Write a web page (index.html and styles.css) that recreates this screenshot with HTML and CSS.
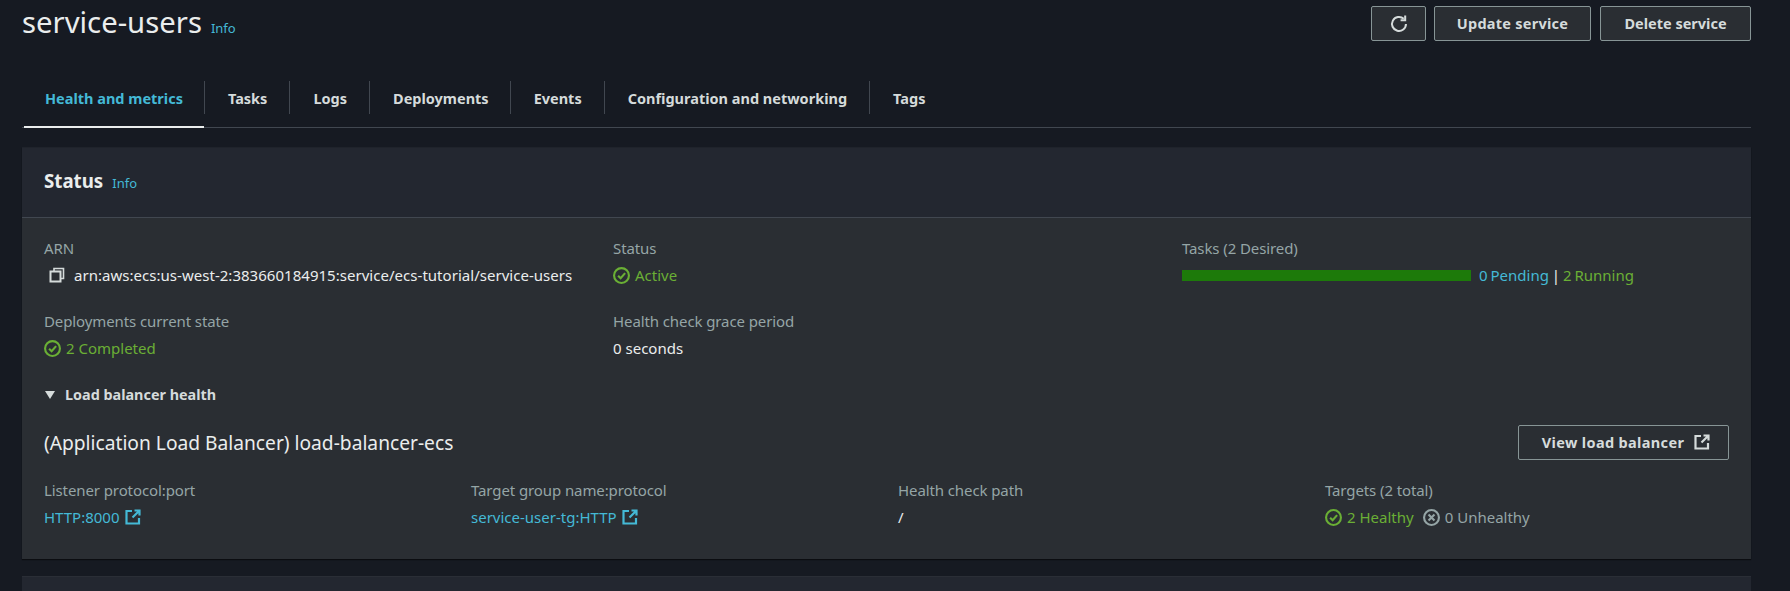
FILE: index.html
```html
<!DOCTYPE html>
<html lang="en">
<head>
<meta charset="utf-8">
<title>service-users</title>
<link rel="stylesheet" href="styles.css">
</head>
<body>
<svg class="defs" width="0" height="0" aria-hidden="true">
  <symbol id="ok" viewBox="0 0 16 16"><circle cx="8" cy="8" r="7" fill="none" stroke="currentColor" stroke-width="2"/><path d="M4.8 8.2 7.2 10.6 11.4 5.8" fill="none" stroke="currentColor" stroke-width="2"/></symbol>
  <symbol id="ext" viewBox="0 0 16 16"><path d="M7 2H1.5V14.5H14V9M9.5 1.5H14.5V6.5M14.5 1.5 7.5 8.5" fill="none" stroke="currentColor" stroke-width="2.2"/></symbol>
</svg>
<main class="page">
  <header class="head">
    <div class="title-wrap"><h1 class="title">service-users</h1><a class="info info-title">Info</a></div>
    <div class="actions">
      <button class="btn btn-icon" aria-label="Refresh"><svg width="18" height="18" viewBox="0 0 16 16"><path d="M14.2 8a6.2 6.2 0 1 1-2-4.6" fill="none" stroke="currentColor" stroke-width="1.8"/><path d="M13.5 0.5V4.6H9.4" fill="none" stroke="currentColor" stroke-width="1.8"/></svg></button>
      <button class="btn btn-update">Update service</button>
      <button class="btn btn-delete">Delete service</button>
    </div>
  </header>
  <nav class="tabs">
    <a class="tab tab-active">Health and metrics</a>
    <a class="tab">Tasks</a>
    <a class="tab">Logs</a>
    <a class="tab tab-tight">Deployments</a>
    <a class="tab">Events</a>
    <a class="tab">Configuration and networking</a>
    <a class="tab tab-last">Tags</a>
  </nav>
  <section class="card">
    <div class="card-head"><h2 class="card-title">Status</h2><a class="info">Info</a></div>
    <div class="card-body">
      <div class="cols3">
        <div class="kv">
          <div class="label">ARN</div>
          <div class="value arn"><svg class="copy" width="16" height="16" viewBox="0 0 16 16"><path d="M5 4.5V1.5H14.5V11.5H11.5" fill="none" stroke="currentColor" stroke-width="1.6"/><rect x="1.5" y="4.5" width="10" height="10" fill="none" stroke="currentColor" stroke-width="2"/></svg>arn:aws:ecs:us-west-2:383660184915:service/ecs-tutorial/service-users</div>
        </div>
        <div class="kv">
          <div class="label">Status</div>
          <div class="value ok"><svg class="ico"><use href="#ok"/></svg>Active</div>
        </div>
        <div class="kv">
          <div class="label">Tasks (2 Desired)</div>
          <div class="value tasks"><span class="bar"></span><span class="task-text"><a class="link">0 Pending</a> | <span class="ok">2 Running</span></span></div>
        </div>
        <div class="kv">
          <div class="label">Deployments current state</div>
          <div class="value ok"><svg class="ico"><use href="#ok"/></svg>2 Completed</div>
        </div>
        <div class="kv">
          <div class="label">Health check grace period</div>
          <div class="value">0 seconds</div>
        </div>
      </div>
      <div class="expand"><span class="caret"></span>Load balancer health</div>
      <div class="lb-head">
        <h3 class="lb-title">(Application Load Balancer) load-balancer-ecs</h3>
        <button class="btn btn-view">View load balancer<svg width="16" height="16"><use href="#ext"/></svg></button>
      </div>
      <div class="cols4">
        <div class="kv">
          <div class="label">Listener protocol:port</div>
          <div class="value link">HTTP:8000<svg class="ico-ext"><use href="#ext"/></svg></div>
        </div>
        <div class="kv">
          <div class="label">Target group name:protocol</div>
          <div class="value link">service-user-tg:HTTP<svg class="ico-ext"><use href="#ext"/></svg></div>
        </div>
        <div class="kv">
          <div class="label">Health check path</div>
          <div class="value">/</div>
        </div>
        <div class="kv">
          <div class="label">Targets (2 total)</div>
          <div class="value targets"><span class="ok state"><svg class="ico"><use href="#ok"/></svg>2 Healthy</span><span class="muted state"><svg class="ico" viewBox="0 0 16 16"><circle cx="8" cy="8" r="7" fill="none" stroke="currentColor" stroke-width="2"/><path d="M5.2 5.2 10.8 10.8M10.8 5.2 5.2 10.8" fill="none" stroke="currentColor" stroke-width="2"/></svg>0 Unhealthy</span></div>
        </div>
      </div>
    </div>
  </section>
  <section class="card card-next"></section>
</main>
</body>
</html>
```
FILE: styles.css
```css
* { box-sizing: border-box; }
html, body { margin: 0; height: 591px; overflow: hidden; }
body { background: #161a22; color: #d5dbdb; font-family: "Noto Sans", "Open Sans", sans-serif; font-size: 15px; line-height: 20px; }
.defs { position: absolute; }
.page { width: 1751px; margin: 0; padding: 0 0 0 22px; }
.head { display: flex; justify-content: space-between; height: 81px; }
.title-wrap { display: flex; align-items: baseline; gap: 9px; height: 40px; }
.title { margin: 0; font-size: 29.3px; line-height: 44px; font-weight: 400; color: #eaeded; }
.info { color: #44b9d6; font-size: 13px; font-weight: 400; }
.actions { display: flex; padding-top: 6px; height: 41px; }
.btn { height: 35px; background: #2a2e33; border: 1px solid #879596; border-radius: 2px; color: #d5dbdb; font: 700 14.5px/20px "Noto Sans", sans-serif; letter-spacing: .25px; padding: 0 0 2px; display: flex; align-items: center; justify-content: center; }
.btn-icon { width: 55px; margin-right: 8px; padding: 0; }
.btn-update { width: 157px; margin-right: 9px; }
.btn-delete { width: 151px; letter-spacing: 0; }
.btn-view { width: 211px; background: transparent; gap: 10px; letter-spacing: .35px; padding-left: 5px; }
.tabs { display: flex; height: 47px; border-bottom: 1px solid #414750; align-items: flex-start; margin-bottom: 19px; }
.tab { height: 33px; margin-top: 0; display: flex; align-items: center; padding: 1px 22px 0 23px; border-left: 1px solid #414750; color: #d5dbdb; font-weight: 700; font-size: 14.5px; position: relative; }
.tab-active { color: #44b9d6; border-left: 0; margin-left: 2px; padding: 1px 21px 0 21px; }
.tab-tight { padding-right: 21px; }
.tab-active::after { content: ""; position: absolute; left: 0; right: 0; top: 45px; height: 2px; background: #eaeded; }
.card { background: #2a2e33; box-shadow: 0 1px 1px #0b0d11; }
.card-head { height: 71px; background: #232730; border-bottom: 1px solid #414750; display: flex; align-items: baseline; gap: 9px; padding: 22px 22px 0; border-top: 1px solid #1f232b; }
.card-title { margin: 0; font-size: 18.7px; line-height: 22px; font-weight: 700; color: #eaeded; }
.card-body { height: 341px; padding: 20px 22px 0; }
.cols3 { display: grid; grid-template-columns: repeat(3, 569px); row-gap: 26px; }
.cols4 { display: grid; grid-template-columns: repeat(4, 427px); margin-top: 20px; }
.label { color: #95a5a6; line-height: 20px; height: 20px; letter-spacing: -.1px; }
.value { display: flex; align-items: center; margin-top: 7px; height: 20px; color: #eaeded; }
.arn { padding-left: 5px; letter-spacing: .03px; }
.copy { margin-right: 9px; color: #d5dbdb; }
.ok { color: #6aaf35; }
.value.ok { color: #6aaf35; }
.value.link { color: #44b9d6; }
.link { color: #44b9d6; }
.muted { color: #95a5a6; }
.ico { width: 17px; height: 17px; margin-right: 5px; flex: none; }
.ico-ext { width: 16px; height: 16px; margin-left: 5px; }
.tasks { gap: 8px; color: #eaeded; }
.task-text { word-spacing: -1px; }
.bar { width: 289px; height: 11px; background: #1d7a0a; }
.targets { gap: 9px; }
.state { display: flex; align-items: center; }
.expand { display: flex; align-items: center; margin-top: 27px; height: 20px; font-weight: 700; font-size: 14.4px; color: #d5dbdb; }
.caret { width: 0; height: 0; border-left: 5.5px solid transparent; border-right: 5.5px solid transparent; border-top: 8px solid #d5dbdb; margin-right: 10px; margin-left: 1px; }
.lb-head { display: flex; justify-content: space-between; align-items: center; margin-top: 20px; height: 35px; }
.lb-title { margin: 0; font-size: 19.2px; font-weight: 400; line-height: 22px; color: #eaeded; }
.card-next { margin-top: 17px; height: 30px; background: #232730; box-shadow: none; border-top: 1px solid #2a2e36; }
```
